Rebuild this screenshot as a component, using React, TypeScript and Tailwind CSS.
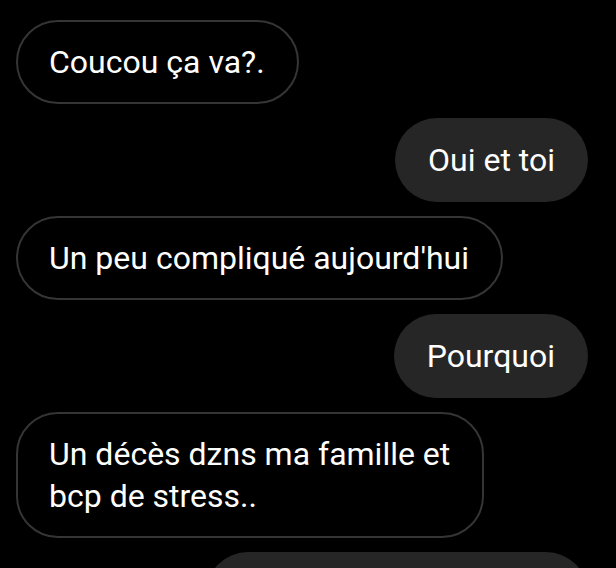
import React from "react"

interface Message {
  text: string
  mine: boolean
}

const messages: Message[] = [
  { text: "Coucou ça va?.", mine: false },
  { text: "Oui et toi", mine: true },
  { text: "Un peu compliqué aujourd'hui", mine: false },
  { text: "Pourquoi", mine: true },
  { text: "Un décès dzns ma famille et\nbcp de stress..", mine: false },
  { text: "Oh non, courage à toi !", mine: true },
]

const Bubble: React.FC<Message> = ({ text, mine }) => {
  return (
    <div className={mine ? "flex justify-end" : "flex justify-start"}>
      <div
        className={
          mine
            ? "max-w-[490px] whitespace-pre-line rounded-[42px] bg-[#262626] px-[33px] py-[21px] text-[32px] leading-[42px] text-white"
            : "max-w-[490px] whitespace-pre-line rounded-[42px] border-2 border-[#353535] pl-[31px] pr-[32px] py-[19px] text-[32px] leading-[42px] text-white"
        }
      >
        {text}
      </div>
    </div>
  )
}

export default function App() {
  return (
    <div
      className="h-[568px] w-[616px] overflow-hidden bg-black pl-4 pr-7 pt-5"
      style={{ fontFamily: "Roboto, 'Noto Sans', sans-serif" }}
    >
      <div className="flex flex-col gap-[14px]">
        {messages.map((m, i) => (
          <Bubble key={i} text={m.text} mine={m.mine} />
        ))}
      </div>
    </div>
  )
}
